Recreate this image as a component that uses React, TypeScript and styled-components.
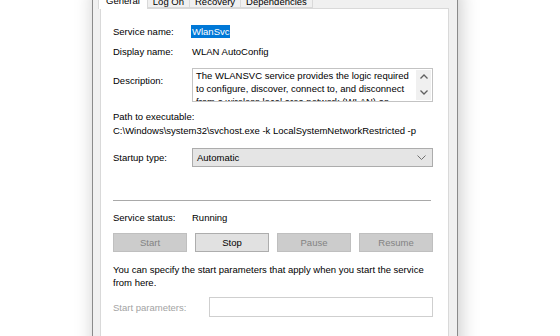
import styled, { createGlobalStyle } from "styled-components"

const GlobalStyle = createGlobalStyle`
  *, *::before, *::after {
    box-sizing: border-box;
  }
  html, body {
    margin: 0;
    padding: 0;
    background: #fff;
  }
  body {
    font-family: "Liberation Sans", Arial, sans-serif;
    font-size: 9.5px;
    color: #000;
  }
`

const Page = styled.div`
  width: 560px;
  height: 336px;
  overflow: hidden;
  background: #fff;
  display: flex;
  align-items: flex-start;
`

const Window = styled.div`
  margin-left: 92px;
  margin-top: -12px;
  width: 366px;
  height: 380px;
  display: flex;
  flex-direction: column;
  padding: 0 8px 0 7px;
  background: #f0f0f0;
  border-left: 1px solid #8a8a8a;
  border-right: 1px solid #8a8a8a;
  box-shadow: 2px 0 18px rgba(0, 0, 0, 0.22);
`

const TabStrip = styled.div`
  display: flex;
  align-items: flex-end;
  height: 20px;
  margin-left: -2px;
  position: relative;
  z-index: 1;
`

const Tab = styled.div<{ $active?: boolean }>`
  height: ${(p) => (p.$active ? "21px" : "18px")};
  line-height: ${(p) => (p.$active ? "24px" : "21px")};
  padding: 0 ${(p) => (p.$active ? "7px" : "5px")};
  margin-bottom: ${(p) => (p.$active ? "-1px" : "0")};
  margin-left: -1px;
  background: ${(p) => (p.$active ? "#fff" : "#f0f0f0")};
  border: 1px solid #d9d9d9;
  border-bottom: ${(p) => (p.$active ? "none" : "1px solid #d9d9d9")};
  white-space: nowrap;
  overflow: hidden;
  &:first-child {
    margin-left: 0;
  }
`

const Panel = styled.div`
  flex: 1;
  display: flex;
  flex-direction: column;
  background: #fff;
  border: 1px solid #d9d9d9;
  padding: 16px 15px 20px 12px;
`

const FieldRow = styled.div<{ $top: number; $start?: boolean; $labelWidth?: number }>`
  display: grid;
  grid-template-columns: ${(p) => p.$labelWidth ?? 79}px 1fr;
  align-items: ${(p) => (p.$start ? "start" : "center")};
  margin-top: ${(p) => p.$top}px;
  min-height: 13px;
  line-height: 13px;
`

const Label = styled.div<{ $disabled?: boolean; $offset?: number }>`
  color: ${(p) => (p.$disabled ? "#a3a3a3" : "#000")};
  padding-top: ${(p) => p.$offset ?? 0}px;
  white-space: nowrap;
`

const Value = styled.div`
  white-space: nowrap;
`

const Selected = styled.span`
  background: #0078d7;
  color: #fff;
  padding: 0 1px;
  display: inline-block;
  line-height: 13px;
  margin-left: -1px;
`

const DescBox = styled.div`
  display: flex;
  height: 34px;
  border: 1px solid #c3c3c3;
  overflow: hidden;
`

const DescText = styled.div`
  flex: 1;
  padding: 0 2px 0 3px;
  line-height: 13px;
`

const ScrollBar = styled.div`
  width: 15px;
  margin: 1px;
  background: #f0f0f0;
  display: flex;
  flex-direction: column;
  align-items: center;
  justify-content: space-between;
  padding: 4px 0 5px;
`

const TextLine = styled.div<{ $top: number }>`
  margin-top: ${(p) => p.$top}px;
  line-height: 13px;
  white-space: nowrap;
`

const Combo = styled.div`
  height: 19px;
  display: flex;
  align-items: center;
  justify-content: space-between;
  padding: 0 6px 0 4px;
  background: #e5e5e5;
  border: 1px solid #acacac;
`

const Separator = styled.div`
  margin-top: 33px;
  height: 1px;
  margin-right: 2px;
  background: #a9a9a9;
`

const ButtonRow = styled.div`
  display: flex;
  justify-content: space-between;
  margin-top: 9px;
`

const Button = styled.div<{ $disabled?: boolean }>`
  width: 74px;
  height: 19px;
  display: flex;
  align-items: center;
  justify-content: center;
  background: ${(p) => (p.$disabled ? "#cccccc" : "#e1e1e1")};
  border: 1px solid ${(p) => (p.$disabled ? "#bfbfbf" : "#adadad")};
  color: ${(p) => (p.$disabled ? "#838383" : "#000")};
`

const Paragraph = styled.div`
  margin-top: 11px;
  line-height: 13px;
`

const Input = styled.div`
  height: 20px;
  background: #fff;
  border: 1px solid #cfcfcf;
`

const Chevron = ({ up }: { up?: boolean }) => (
  <svg width="8" height="5" viewBox="0 0 8 5">
    <polyline
      points={up ? "0.5,4.5 4,1 7.5,4.5" : "0.5,0.5 4,4 7.5,0.5"}
      fill="none"
      stroke="#606060"
      strokeWidth="1.3"
    />
  </svg>
)

const ComboArrow = () => (
  <svg width="9" height="5" viewBox="0 0 9 5">
    <polyline points="0.5,0.5 4.5,4.5 8.5,0.5" fill="none" stroke="#707070" strokeWidth="1" />
  </svg>
)

const App = () => {
  return (
    <>
      <GlobalStyle />
      <Page>
        <Window>
          <TabStrip>
            <Tab $active>General</Tab>
            <Tab>Log On</Tab>
            <Tab>Recovery</Tab>
            <Tab>Dependencies</Tab>
          </TabStrip>
          <Panel>
            <FieldRow $top={0}>
              <Label>Service name:</Label>
              <Value>
                <Selected>WlanSvc</Selected>
              </Value>
            </FieldRow>
            <FieldRow $top={7}>
              <Label>Display name:</Label>
              <Value>WLAN AutoConfig</Value>
            </FieldRow>
            <FieldRow $top={10} $start>
              <Label $offset={6}>Description:</Label>
              <DescBox>
                <DescText>
                  The WLANSVC service provides the logic required to configure, discover, connect to, and
                  disconnect from a wireless local area network (WLAN) as defined by IEEE 802.11 standards.
                </DescText>
                <ScrollBar>
                  <Chevron up />
                  <Chevron />
                </ScrollBar>
              </DescBox>
            </FieldRow>
            <TextLine $top={8}>Path to executable:</TextLine>
            <TextLine $top={1}>
              C:\Windows\system32\svchost.exe -k LocalSystemNetworkRestricted -p
            </TextLine>
            <FieldRow $top={11}>
              <Label>Startup type:</Label>
              <Combo>
                <span>Automatic</span>
                <ComboArrow />
              </Combo>
            </FieldRow>
            <Separator />
            <FieldRow $top={10}>
              <Label>Service status:</Label>
              <Value>Running</Value>
            </FieldRow>
            <ButtonRow>
              <Button $disabled>Start</Button>
              <Button>Stop</Button>
              <Button $disabled>Pause</Button>
              <Button $disabled>Resume</Button>
            </ButtonRow>
            <Paragraph>
              You can specify the start parameters that apply when you start the service
              <br />
              from here.
            </Paragraph>
            <FieldRow $top={8} $labelWidth={96}>
              <Label $disabled>Start parameters:</Label>
              <Input />
            </FieldRow>
          </Panel>
        </Window>
      </Page>
    </>
  )
}

export default App
